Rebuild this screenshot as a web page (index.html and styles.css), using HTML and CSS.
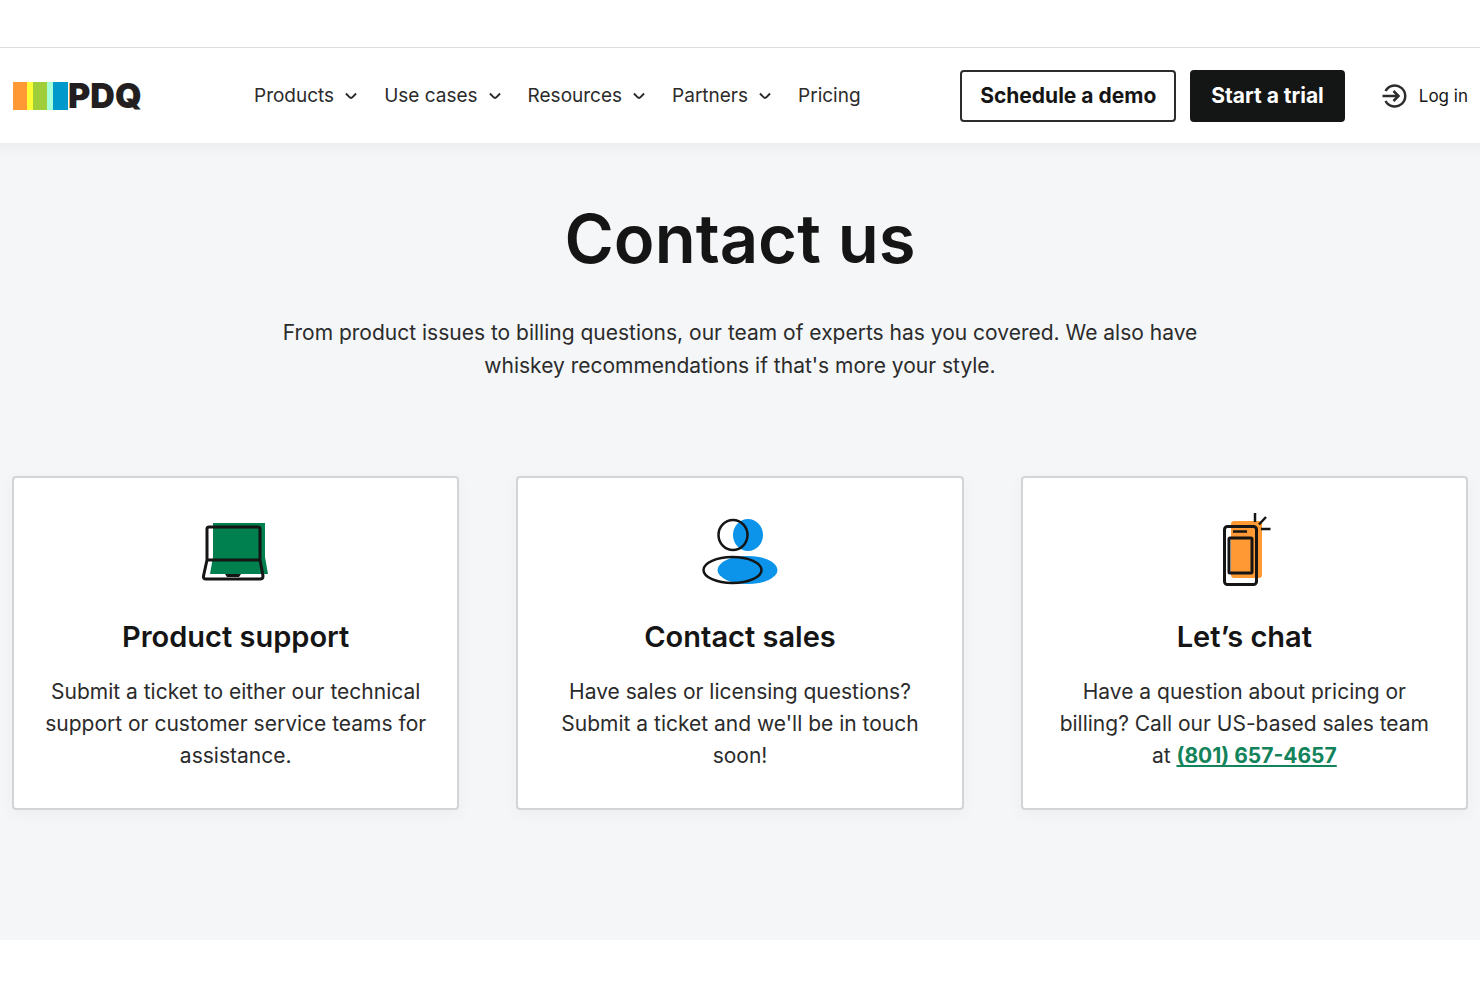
FILE: index.html
```html
<!DOCTYPE html>
<html lang="en">
<head>
  <meta charset="UTF-8" />
  <meta name="viewport" content="width=device-width, initial-scale=1.0"/>
  <title>Contact us</title>
  <link rel="stylesheet" href="styles.css">
</head>
<body>

  <header class="header">
    <a class="logo" href="#">
      <svg class="logo-bars" viewBox="0 0 56 28" aria-hidden="true">
        <rect x="1" width="14" height="28" fill="#ff9933"/>
        <rect x="15" width="6" height="28" fill="#ffff33"/>
        <rect x="21" width="14" height="28" fill="#9fce3a"/>
        <rect x="35" width="6" height="28" fill="#a3ffd8"/>
        <rect x="41" width="15" height="28" fill="#0099cc"/>
      </svg>
      <span class="logo-text">PDQ</span>
    </a>

    <nav class="nav">
      <button class="nav-item">Products
        <svg class="chevron" viewBox="0 0 12 8"><path d="M1 1.5 C3 3.5 5 6 6 6 S9 3.5 11 1.5"/></svg>
      </button>
      <button class="nav-item">Use cases
        <svg class="chevron" viewBox="0 0 12 8"><path d="M1 1.5 C3 3.5 5 6 6 6 S9 3.5 11 1.5"/></svg>
      </button>
      <button class="nav-item">Resources
        <svg class="chevron" viewBox="0 0 12 8"><path d="M1 1.5 C3 3.5 5 6 6 6 S9 3.5 11 1.5"/></svg>
      </button>
      <button class="nav-item">Partners
        <svg class="chevron" viewBox="0 0 12 8"><path d="M1 1.5 C3 3.5 5 6 6 6 S9 3.5 11 1.5"/></svg>
      </button>
      <a class="nav-item" href="#">Pricing</a>
    </nav>

    <div class="actions">
      <button class="btn">Schedule a demo</button>
      <button class="btn btn-dark">Start a trial</button>
      <a class="login" href="#">
        <svg class="login-icon" viewBox="0 0 26 26">
          <path d="M4.5 8 A10.5 10.5 0 1 1 4.5 18"/>
          <path d="M1.5 13 H17.5 M12.5 8 L17.5 13 L12.5 18"/>
        </svg>
        Log in
      </a>
    </div>
  </header>

  <main class="contact">
    <h1>Contact us</h1>
    <p class="intro">From product issues to billing questions, our team of experts has you covered. We also have whiskey recommendations if that's more your style.</p>

    <div class="cards">
      <section class="card">
        <svg class="card-icon" viewBox="0 0 80 80">
          <path d="M17 9 H69 V43 L72 60 H14 L17 43 Z" fill="#00804f"/>
          <path d="M11 46 V15 Q11 13 13 13 H62 Q64 13 64 15 V46 M11 46 H64 L67 62 Q67 65 64 65 H10 Q7 65 7.5 62 Z" fill="none" stroke="#151515" stroke-width="3"/>
          <path d="M29 60 H45 L43 63 H31 Z" fill="#151515"/>
        </svg>
        <h2>Product support</h2>
        <p>Submit a ticket to either our technical support or customer service teams for assistance.</p>
      </section>

      <section class="card">
        <svg class="card-icon" viewBox="0 0 80 80">
          <ellipse cx="48" cy="21" rx="15" ry="16" fill="#0c94ea"/>
          <ellipse cx="47.5" cy="56" rx="30" ry="14" fill="#0c94ea"/>
          <ellipse cx="33" cy="21" rx="14.5" ry="15" fill="none" stroke="#151515" stroke-width="2.5"/>
          <ellipse cx="32.5" cy="56" rx="29" ry="13" fill="none" stroke="#151515" stroke-width="2.5"/>
        </svg>
        <h2>Contact sales</h2>
        <p>Have sales or licensing questions? Submit a ticket and we'll be in touch soon!</p>
      </section>

      <section class="card">
        <svg class="card-icon" viewBox="0 0 80 80">
          <rect x="27" y="7" width="31" height="57" rx="3" fill="#ff9933"/>
          <rect x="20.5" y="12.5" width="32" height="58" rx="3" fill="none" stroke="#151515" stroke-width="3"/>
          <rect x="25" y="24" width="23" height="35" rx="1" fill="none" stroke="#151515" stroke-width="3"/>
          <path d="M29 17.5 H43" stroke="#151515" stroke-width="2.5"/>
          <path d="M51 -1 V8 M62 3 L55 10.5 M57 15 H66.5" stroke="#151515" stroke-width="2.5"/>
        </svg>
        <h2>Let’s chat</h2>
        <p>Have a question about pricing or billing? Call our US-based sales team at <a class="phone" href="tel:8016574657">(801) 657-4657</a></p>
      </section>
    </div>
  </main>

</body>
</html>
```

FILE: styles.css
```css
* {
  box-sizing: border-box;
}
body {
  margin: 0;
  padding-top: 47px;
  font-family: Inter, "Liberation Sans", sans-serif;
  color: #151515;
  background: #fff;
}
button {
  font-family: inherit;
  color: inherit;
  cursor: pointer;
}
a {
  color: inherit;
  text-decoration: none;
}

/* header */
.header {
  display: flex;
  align-items: center;
  height: 96px;
  padding: 0 12px;
  border-top: 1px solid #dededb;
  background: #fff;
}
.logo {
  display: flex;
  align-items: center;
  width: 242px;
}
.logo-bars {
  width: 56px;
  height: 28px;
}
.logo-text {
  font-size: 34px;
  line-height: 28px;
  font-weight: 900;
  color: #231f20;
}
.nav {
  display: flex;
  gap: 27px;
}
.nav-item {
  display: flex;
  align-items: center;
  gap: 11px;
  padding: 0;
  border: none;
  background: none;
  font-size: 19px;
  line-height: 28px;
  color: #2b2b2b;
}
.chevron {
  width: 12px;
  height: 8px;
  fill: none;
  stroke: #2b2b2b;
  stroke-width: 2;
}
.actions {
  display: flex;
  align-items: center;
  gap: 14px;
  margin-left: auto;
}
.btn {
  height: 52px;
  padding: 0 18px;
  border: 2px solid #2b2d2d;
  border-radius: 4px;
  background: #fff;
  font-size: 21px;
  font-weight: 700;
}
.btn-dark {
  padding: 0 19px;
  background: #141615;
  border-color: #141615;
  color: #fff;
}
.login {
  display: flex;
  align-items: center;
  gap: 12px;
  padding-left: 22px;
  font-size: 17px;
}
.login-icon {
  width: 26px;
  height: 26px;
  fill: none;
  stroke: #2b2d2d;
  stroke-width: 2.5;
}

/* contact section */
.contact {
  padding: 56px 12px 130px;
  background: linear-gradient(#edeff1, #f4f6f8 16px);
  text-align: center;
}
h1 {
  margin: 0 0 37px;
  font-size: 67px;
  line-height: 80px;
  font-weight: 600;
}
.intro {
  max-width: 960px;
  margin: 0 auto 94px;
  font-size: 21px;
  line-height: 33px;
  color: #2b2b2b;
}
.cards {
  display: grid;
  grid-template-columns: repeat(3, 1fr);
  gap: 57px;
}
.card {
  padding: 36px 28px;
  border: 2px solid #d2d5d8;
  border-radius: 4px;
  background: #fff;
  box-shadow: 0 4px 16px rgba(0, 0, 0, 0.04);
}
.card-icon {
  width: 80px;
  height: 80px;
  overflow: visible;
}
.card h2 {
  margin: 21px 0;
  font-size: 29px;
  line-height: 36px;
  font-weight: 600;
}
.card p {
  margin: 0;
  font-size: 21px;
  line-height: 32px;
  color: #2b2b2b;
}
.phone {
  color: #12835a;
  font-weight: 700;
  text-decoration: underline;
}
```
